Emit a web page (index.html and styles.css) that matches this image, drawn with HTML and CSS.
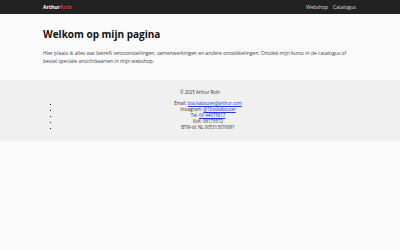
FILE: index.html
```html
<!DOCTYPE html>
<html lang="nl">

<head>
  <meta charset="UTF-8">
  <title>Arthur Roth</title>
  <link rel="stylesheet" href="styles.css">
</head>

<body>
  <header class="topbar">
    <div class="container topbar-inner">
      <a class="logo">Arthur<span>Roth</span></a>
      <nav class="nav">
        <a>Webshop</a>
        <a>Catalogus</a>
      </nav>
    </div>
  </header>
  <main class="container main">
    <h1>Welkom op mijn pagina</h1>
    <p>Hier plaats ik alles wat betreft tentoonstellingen, samenwerkingen en andere ontwikkelingen. Ontdek mijn kunst in de catalogus of bestel speciale ansichtkaarten in mijn webshop.</p>
  </main>
  <footer class="footer">
    <div class="container">
      <p class="copy">&copy; 2025 Arthur Roth</p>
      <ul class="contact">
        <li>Email: <a href="#">bos.kabouter@arthur.com</a></li>
        <li>Instagram: <a href="#">@1boskabouter</a></li>
        <li>Tel: <a href="#">06 44075817</a></li>
        <li>KvK: 98175572</li>
        <li>BTW-id: NL 005313076891</li>
      </ul>
    </div>
  </footer>
</body>

</html>
```

FILE: styles.css
```css
html,
body {
  margin: 0;
  padding: 0;
  height: 100%;
  background: #fafafa;
  font-family: "Open Sans", "Liberation Sans", sans-serif;
  color: #333;
}

.container {
  width: 314px;
  margin: 0 auto;
}

.topbar {
  height: 14px;
  background: #222;
}

.topbar-inner {
  height: 14px;
  display: flex;
  align-items: center;
  justify-content: space-between;
}

.logo {
  font-size: 5px;
  font-weight: bold;
  color: #fff;
}

.logo span {
  color: #e0303a;
}

.nav {
  display: flex;
  gap: 5px;
  margin-right: 1px;
}

.nav a {
  font-size: 5px;
  color: #ddd;
}

.main {
  padding: 12px 0 15px;
}

h1 {
  margin: 0 0 7px;
  font-size: 10px;
  line-height: 16px;
  font-weight: bold;
  color: #111;
}

.main p {
  margin: 0;
  font-size: 5px;
  line-height: 8px;
  color: #444;
}

.footer {
  background: #f0f0f0;
  padding: 9px 0 11px;
  text-align: center;
  font-size: 4.4px;
  color: #333;
}

.copy {
  margin: 0 0 5px;
  line-height: 6px;
}

.contact {
  margin: 0;
  padding-left: 16px;
  list-style: square;
  line-height: 6px;
}

.contact li::marker {
  font-size: 4px;
  color: #222;
}

.contact a {
  color: #2233dd;
}
```
